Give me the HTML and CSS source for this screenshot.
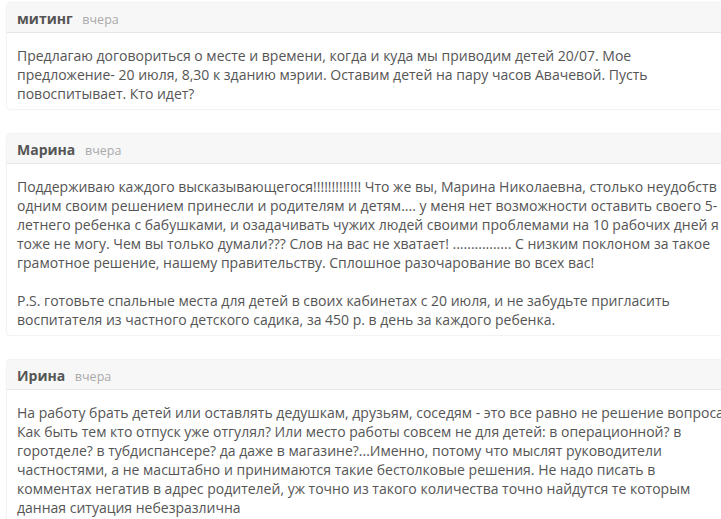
FILE: index.html
```html
<!DOCTYPE html>
<html>
<head>
    <meta charset="utf-8">
    <title>Комментарии</title>
    <link rel="stylesheet" href="styles.css">
</head>
<body>
    <div class="comments">
        <div class="comment">
            <div class="comment_head">
                <span class="author">митинг</span>
                <span class="date">вчера</span>
            </div>
            <div class="comment_body">
                <p>Предлагаю договориться о месте и времени, когда и куда мы приводим детей 20/07. Мое предложение- 20 июля, 8,30 к зданию мэрии. Оставим детей на пару часов Авачевой. Пусть повоспитывает. Кто идет?</p>
            </div>
        </div>

        <div class="comment">
            <div class="comment_head">
                <span class="author">Марина</span>
                <span class="date">вчера</span>
            </div>
            <div class="comment_body">
                <p>Поддерживаю каждого высказывающегося!!!!!!!!!!!!! Что же вы, Марина Николаевна, столько неудобств одним своим решением принесли и родителям и детям.... у меня нет возможности оставить своего 5-летнего ребенка с бабушками, и озадачивать чужих людей своими проблемами на 10 рабочих дней я тоже не могу. Чем вы только думали??? Слов на вас не хватает! ................ С низким поклоном за такое грамотное решение, нашему правительству. Сплошное разочарование во всех вас!</p>
                <p>P.S. готовьте спальные места для детей в своих кабинетах с 20 июля, и не забудьте пригласить воспитателя из частного детского садика, за 450 р. в день за каждого ребенка.</p>
            </div>
        </div>

        <div class="comment">
            <div class="comment_head">
                <span class="author">Ирина</span>
                <span class="date">вчера</span>
            </div>
            <div class="comment_body">
                <p>На работу брать детей или оставлять дедушкам, друзьям, соседям - это все равно не решение вопроса. Как быть тем кто отпуск уже отгулял? Или место работы совсем не для детей: в операционной? в горотделе? в тубдиспансере? да даже в магазине?...Именно, потому что мыслят руководители частностями, а не масштабно и принимаются такие бестолковые решения. Не надо писать в комментах негатив в адрес родителей, уж точно из такого количества точно найдутся те которым данная ситуация небезразлична</p>
            </div>
        </div>
    </div>
</body>
</html>
```

FILE: styles.css
```css
html, body {
    margin: 0;
    padding: 0;
    background: #fff;
    overflow: hidden;
}
.comments {
    width: 735px;
    padding: 3px 0 0 7px;
    font-family: "Open Sans", "Liberation Sans", sans-serif;
    font-size: 14px;
    color: #555;
}
.comment {
    background: #fff;
    border-radius: 3px;
    box-shadow: 0 0 2px rgba(0,0,0,0.18);
    margin-bottom: 25px;
}
.comment_head {
    background: #f7f7f7;
    border-bottom: 1px solid #e6e6e6;
    border-radius: 3px 3px 0 0;
    height: 29px;
    line-height: 31px;
    padding: 0 10px;
}
.author {
    font-weight: bold;
    font-size: 14px;
    color: #555;
    margin-right: 6px;
}
.date {
    font-size: 12.5px;
    color: #aaa;
}
.comment_body {
    padding: 13px 10px 6px;
    line-height: 19px;
}
.comment_body p {
    margin: 0 0 19px;
}
.comment_body p:last-child {
    margin-bottom: 0;
}
```
